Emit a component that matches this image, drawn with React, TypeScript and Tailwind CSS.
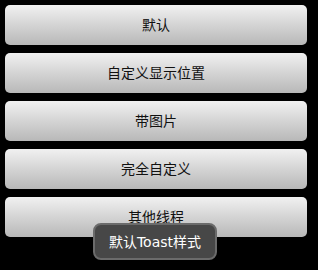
const BUTTONS = ['默认', '自定义显示位置', '带图片', '完全自定义', '其他线程']

export default function App() {
  return (
    <div
      className="relative h-[270px] w-[318px] overflow-hidden bg-black"
      style={{ fontFamily: '"DejaVu Sans", "Noto Sans CJK SC", sans-serif' }}
    >
      <div className="flex flex-col gap-[8px] pt-[5px] pl-[5px] pr-[11px]">
        {BUTTONS.map((label) => (
          <button
            key={label}
            type="button"
            className="flex h-[40px] items-center justify-center rounded-[5px] bg-gradient-to-b from-[#f1f1f1] via-[#d4d4d4] to-[#b8b8b8] text-[14px] leading-none text-[#111]"
          >
            {label}
          </button>
        ))}
      </div>

      {/* toast */}
      <div className="absolute left-[93px] top-[223px] flex h-[37px] w-[124px] items-center justify-center rounded-[8px] border-2 border-[#6b6b6b] bg-[#474747] text-[14px] leading-none text-white">
        默认Toast样式
      </div>
    </div>
  )
}
